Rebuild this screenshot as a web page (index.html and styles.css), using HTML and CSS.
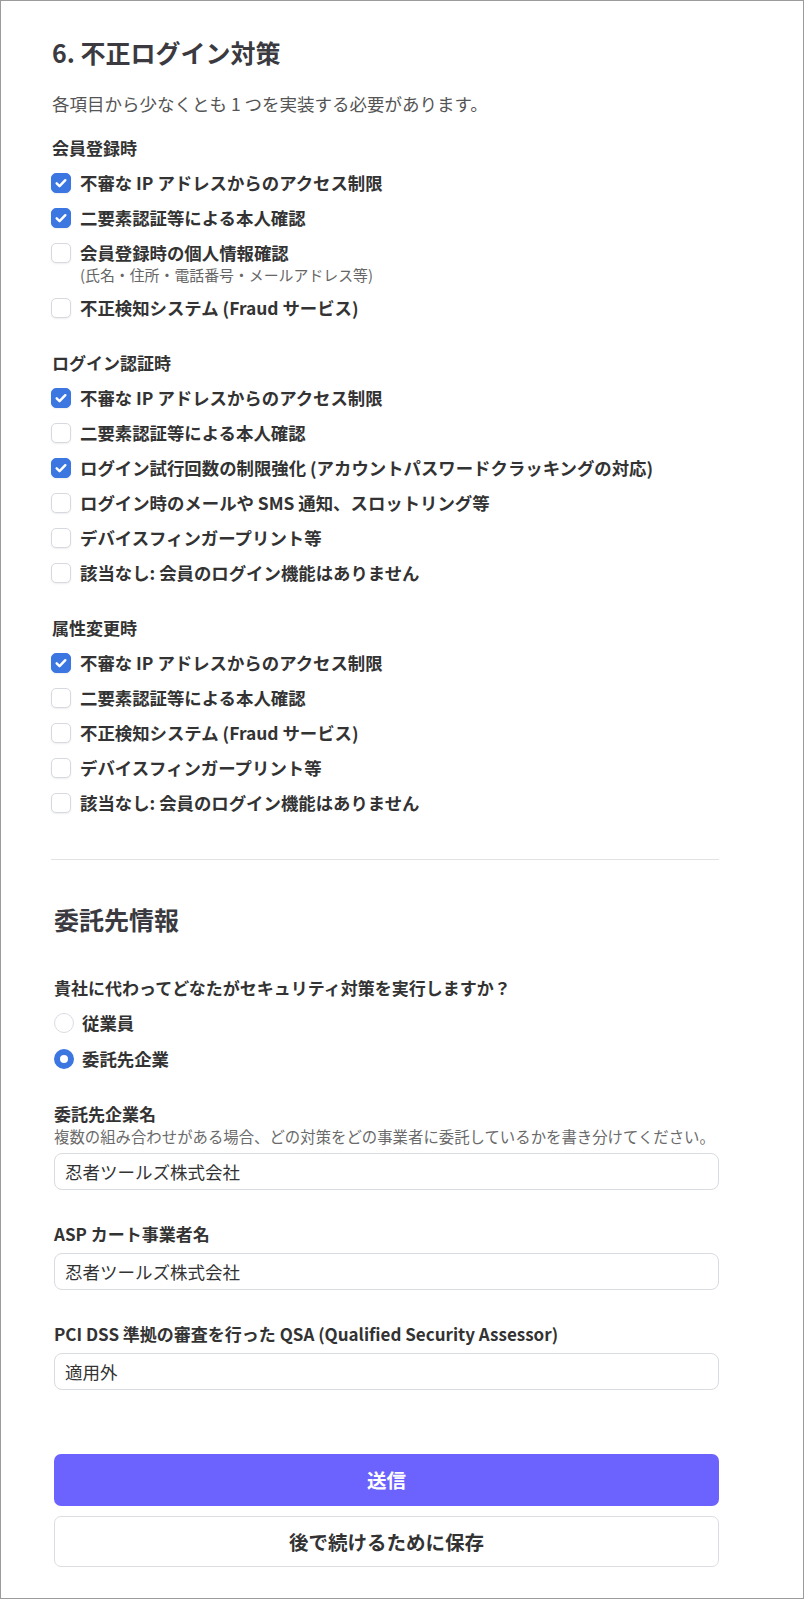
FILE: index.html
```html
<!DOCTYPE html>
<html lang="ja">
<head>
<meta charset="utf-8">
<title>不正ログイン対策</title>
<link rel="stylesheet" href="styles.css">
</head>
<body>
<div class="frame">
  <section class="measures">
    <h1 class="title">6. 不正ログイン対策</h1>
    <p class="lead">各項目から少なくとも 1 つを実装する必要があります。</p>

    <div class="groups">
      <div class="group">
        <div class="group-title">会員登録時</div>
        <div class="opt"><span class="cb on"><svg viewBox="0 0 20 20"><path d="M5.2 10.4l3.2 3.1 6.4-6.6"/></svg></span><span class="opt-label">不審な IP アドレスからのアクセス制限</span></div>
        <div class="opt"><span class="cb on"><svg viewBox="0 0 20 20"><path d="M5.2 10.4l3.2 3.1 6.4-6.6"/></svg></span><span class="opt-label">二要素認証等による本人確認</span></div>
        <div class="opt opt-note">
          <span class="cb"></span>
          <div class="opt-text"><span class="opt-label">会員登録時の個人情報確認</span><span class="note">(氏名・住所・電話番号・メールアドレス等)</span></div>
        </div>
        <div class="opt"><span class="cb"></span><span class="opt-label">不正検知システム (Fraud サービス)</span></div>
      </div>

      <div class="group">
        <div class="group-title">ログイン認証時</div>
        <div class="opt"><span class="cb on"><svg viewBox="0 0 20 20"><path d="M5.2 10.4l3.2 3.1 6.4-6.6"/></svg></span><span class="opt-label">不審な IP アドレスからのアクセス制限</span></div>
        <div class="opt"><span class="cb"></span><span class="opt-label">二要素認証等による本人確認</span></div>
        <div class="opt"><span class="cb on"><svg viewBox="0 0 20 20"><path d="M5.2 10.4l3.2 3.1 6.4-6.6"/></svg></span><span class="opt-label">ログイン試行回数の制限強化 (アカウントパスワードクラッキングの対応)</span></div>
        <div class="opt"><span class="cb"></span><span class="opt-label">ログイン時のメールや SMS 通知、スロットリング等</span></div>
        <div class="opt"><span class="cb"></span><span class="opt-label">デバイスフィンガープリント等</span></div>
        <div class="opt"><span class="cb"></span><span class="opt-label">該当なし: 会員のログイン機能はありません</span></div>
      </div>

      <div class="group">
        <div class="group-title">属性変更時</div>
        <div class="opt"><span class="cb on"><svg viewBox="0 0 20 20"><path d="M5.2 10.4l3.2 3.1 6.4-6.6"/></svg></span><span class="opt-label">不審な IP アドレスからのアクセス制限</span></div>
        <div class="opt"><span class="cb"></span><span class="opt-label">二要素認証等による本人確認</span></div>
        <div class="opt"><span class="cb"></span><span class="opt-label">不正検知システム (Fraud サービス)</span></div>
        <div class="opt"><span class="cb"></span><span class="opt-label">デバイスフィンガープリント等</span></div>
        <div class="opt"><span class="cb"></span><span class="opt-label">該当なし: 会員のログイン機能はありません</span></div>
      </div>
    </div>

    <hr class="divider">
  </section>

  <section class="vendor">
    <h2 class="vendor-title">委託先情報</h2>

    <div class="question">貴社に代わってどなたがセキュリティ対策を実行しますか？</div>
    <div class="radios">
      <div class="opt"><span class="rb"></span><span class="opt-label">従業員</span></div>
      <div class="opt"><span class="rb on"></span><span class="opt-label">委託先企業</span></div>
    </div>

    <div class="field field-first">
      <div class="field-label">委託先企業名</div>
      <div class="helper">複数の組み合わせがある場合、どの対策をどの事業者に委託しているかを書き分けてください。</div>
      <div class="input">忍者ツールズ株式会社</div>
    </div>

    <div class="field">
      <div class="field-label">ASP カート事業者名</div>
      <div class="input">忍者ツールズ株式会社</div>
    </div>

    <div class="field">
      <div class="field-label">PCI DSS 準拠の審査を行った QSA (Qualified Security Assessor)</div>
      <div class="input">適用外</div>
    </div>

    <div class="actions">
      <button class="btn btn-primary" type="button">送信</button>
      <button class="btn btn-secondary" type="button">後で続けるために保存</button>
    </div>
  </section>
</div>
</body>
</html>
```

FILE: styles.css
```css
* { box-sizing: border-box; }

html, body {
  margin: 0;
  padding: 0;
  background: #ffffff;
}

body {
  font-family: "Noto Sans CJK JP", "Noto Sans", sans-serif;
  color: #333333;
}

.frame {
  width: 804px;
  height: 1599px;
  border: 1px solid #9b9b9b;
  padding: 36px 0 0 50px;
  overflow: hidden;
}

.measures {
  width: 668px;
}

.title {
  margin: 0;
  font-size: 25px;
  line-height: 30px;
  font-weight: 700;
  color: #3a3a40;
  padding-left: 1px;
}

.lead {
  margin: 25px 0 0;
  font-size: 17.5px;
  line-height: 24px;
  color: #555555;
  padding-left: 1px;
}

.groups {
  margin-top: 20px;
  display: flex;
  flex-direction: column;
  gap: 31px;
}

.group {
  display: flex;
  flex-direction: column;
  gap: 11px;
}

.group-title {
  font-size: 17px;
  line-height: 24px;
  font-weight: 700;
  color: #333333;
  padding-left: 1px;
}

.opt {
  display: flex;
  align-items: center;
  gap: 9px;
  min-height: 24px;
}

.opt-note {
  align-items: flex-start;
}

.opt-note .cb {
  margin-top: 2px;
}

.opt-text {
  display: flex;
  flex-direction: column;
}

.opt-label {
  font-size: 17.4px;
  line-height: 24px;
  font-weight: 700;
  color: #333333;
  white-space: nowrap;
}

.note {
  font-size: 14.9px;
  line-height: 20px;
  color: #666666;
}

.cb {
  flex: none;
  width: 20px;
  height: 20px;
  border-radius: 5px;
  border: 1px solid #d6dae0;
  background: #ffffff;
  box-shadow: 0 1px 2px rgba(0, 0, 0, 0.07);
  display: flex;
  align-items: center;
  justify-content: center;
}

.cb.on {
  background: #3b76e1;
  border-color: #3b76e1;
}

.cb svg {
  width: 20px;
  height: 20px;
  fill: none;
  stroke: #ffffff;
  stroke-width: 2.7;
  stroke-linecap: round;
  stroke-linejoin: round;
}

.divider {
  margin: 44px 0 0;
  border: 0;
  border-top: 1px solid #e2e2e2;
  height: 0;
}

.vendor {
  width: 668px;
  padding-left: 3px;
}

.vendor-title {
  margin: 44px 0 0;
  font-size: 25px;
  line-height: 30px;
  font-weight: 700;
  color: #3a3a40;
}

.question {
  margin-top: 42px;
  font-size: 17px;
  line-height: 24px;
  font-weight: 700;
  color: #333333;
}

.radios {
  margin-top: 11px;
  display: flex;
  flex-direction: column;
  gap: 11.5px;
}

.radios .opt {
  gap: 8px;
}

.rb {
  flex: none;
  width: 20px;
  height: 20px;
  border-radius: 50%;
  border: 1px solid #d9dde3;
  background: #ffffff;
}

.rb.on {
  border: 6px solid #3b76e1;
}

.field {
  margin-top: 32px;
  display: flex;
  flex-direction: column;
}

.field-first {
  margin-top: 31px;
}

.field-label {
  font-size: 17px;
  line-height: 24px;
  font-weight: 700;
  color: #333333;
}

.helper {
  font-size: 15.4px;
  line-height: 20px;
  color: #6b6b6b;
  white-space: nowrap;
}

.input {
  margin-top: 7px;
  height: 37px;
  border: 1px solid #d8dbe0;
  border-radius: 8px;
  padding: 0 10px;
  font-size: 17.5px;
  line-height: 35px;
  color: #333333;
}

.actions {
  margin-top: 64px;
  display: flex;
  flex-direction: column;
  gap: 10px;
}

.btn {
  display: block;
  width: 100%;
  font-family: inherit;
  font-size: 19.5px;
  font-weight: 700;
  border-radius: 7px;
  cursor: pointer;
}

.btn-primary {
  height: 52px;
  background: #6c63fe;
  border: 0;
  color: #ffffff;
}

.btn-secondary {
  height: 51px;
  background: #ffffff;
  border: 1px solid #dcdde2;
  color: #333333;
}
```
